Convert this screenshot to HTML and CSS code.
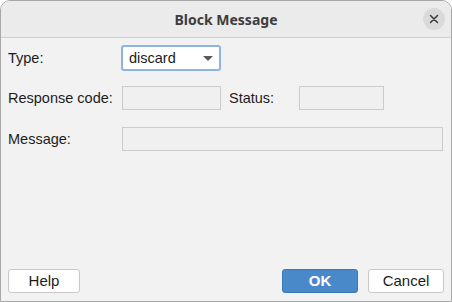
FILE: index.html
```html
<!DOCTYPE html>
<html lang="en">
<head>
	<meta charset="UTF-8">
	<title>Block Message</title>
	<link rel="stylesheet" href="styles.css">
</head>
<body>
	<div class="window">
		<div class="titlebar">
			<span></span>
			<div class="title">Block Message</div>
			<div class="close-wrap">
				<div class="close">
					<svg width="10" height="10" viewBox="0 0 10 10">
						<path d="M1.5 1.5 L8.5 8.5 M8.5 1.5 L1.5 8.5" stroke="#3a3a3a" stroke-width="1.5" stroke-linecap="round"/>
					</svg>
				</div>
			</div>
		</div>

		<div class="content">
			<div class="row row-type">
				<label class="lbl">Type:</label>
				<div class="combo">
					<span>discard</span>
					<span class="arrow"></span>
				</div>
			</div>

			<div class="row row-code">
				<label class="lbl">Response code:</label>
				<div class="field field-code"></div>
				<label class="lbl-status">Status:</label>
				<div class="field field-status"></div>
			</div>

			<div class="row row-msg">
				<label class="lbl">Message:</label>
				<div class="field field-msg"></div>
			</div>
		</div>

		<div class="footer">
			<div class="btn btn-help">Help</div>
			<div class="spacer"></div>
			<div class="btn btn-ok">OK</div>
			<div class="btn btn-cancel">Cancel</div>
		</div>
	</div>
</body>
</html>
```

FILE: styles.css
```css
*{
	box-sizing: border-box;
	margin: 0;
	padding: 0;
}
body{
	width: 452px;
	height: 302px;
	overflow: hidden;
	font-family: "Liberation Sans", Arial, sans-serif;
	font-size: 14.5px;
	color: #1c1c1c;
	background: #ffffff;
}
.window{
	width: 452px;
	height: 302px;
	border: 1px solid #a8a8a8;
	border-radius: 10px 10px 0 0;
	background: #f2f2f2;
	display: flex;
	flex-direction: column;
	overflow: hidden;
}
.titlebar{
	height: 37px;
	flex: none;
	background: #ebebeb;
	border-bottom: 1px solid #d0d0d0;
	display: grid;
	grid-template-columns: 1fr auto 1fr;
	align-items: center;
}
.title{
	font-family: "Noto Sans", "DejaVu Sans", sans-serif;
	font-weight: bold;
	font-size: 14px;
	color: #3d3d3d;
	padding-top: 1px;
}
.close-wrap{
	display: flex;
	justify-content: flex-end;
	padding-right: 6px;
}
.close{
	width: 22px;
	height: 22px;
	border-radius: 50%;
	background: #dadada;
	display: flex;
	align-items: center;
	justify-content: center;
}
.content{
	flex: 1;
	padding: 7px 7px 0;
}
.row{
	display: flex;
	align-items: center;
}
.row-code{
	margin-top: 15px;
}
.row-msg{
	margin-top: 17px;
}
.lbl{
	width: 113px;
	flex: none;
}
.lbl-status{
	width: 70px;
	margin-left: 8px;
	flex: none;
}
.combo{
	width: 100px;
	height: 26px;
	border: 2px solid #8cb5e2;
	border-radius: 3px;
	background: #fff;
	display: flex;
	align-items: center;
	justify-content: space-between;
	padding: 0 6px 0 6px;
}
.arrow{
	width: 0;
	height: 0;
	border-left: 5px solid transparent;
	border-right: 5px solid transparent;
	border-top: 5px solid #5a5a5a;
	margin-top: 1px;
}
.field{
	height: 24px;
	border: 1px solid #cccccc;
	background: #f0f0f0;
	flex: none;
}
.field-code{
	width: 99px;
	margin-left: 1px;
}
.field-status{
	width: 85px;
}
.field-msg{
	width: 321px;
	margin-left: 1px;
}
.footer{
	flex: none;
	display: flex;
	gap: 10px;
	padding: 0 7px 8px;
}
.spacer{
	flex: 1;
}
.btn{
	height: 24px;
	border: 1px solid #c8c8c8;
	border-radius: 3px;
	background: #fff;
	text-align: center;
	line-height: 22px;
	font-size: 15px;
}
.btn-help{
	width: 72px;
}
.btn-ok{
	width: 76px;
	background: #4a89c9;
	border-color: #3b79b8;
	color: #fff;
	font-weight: bold;
}
.btn-cancel{
	width: 76px;
}
```
